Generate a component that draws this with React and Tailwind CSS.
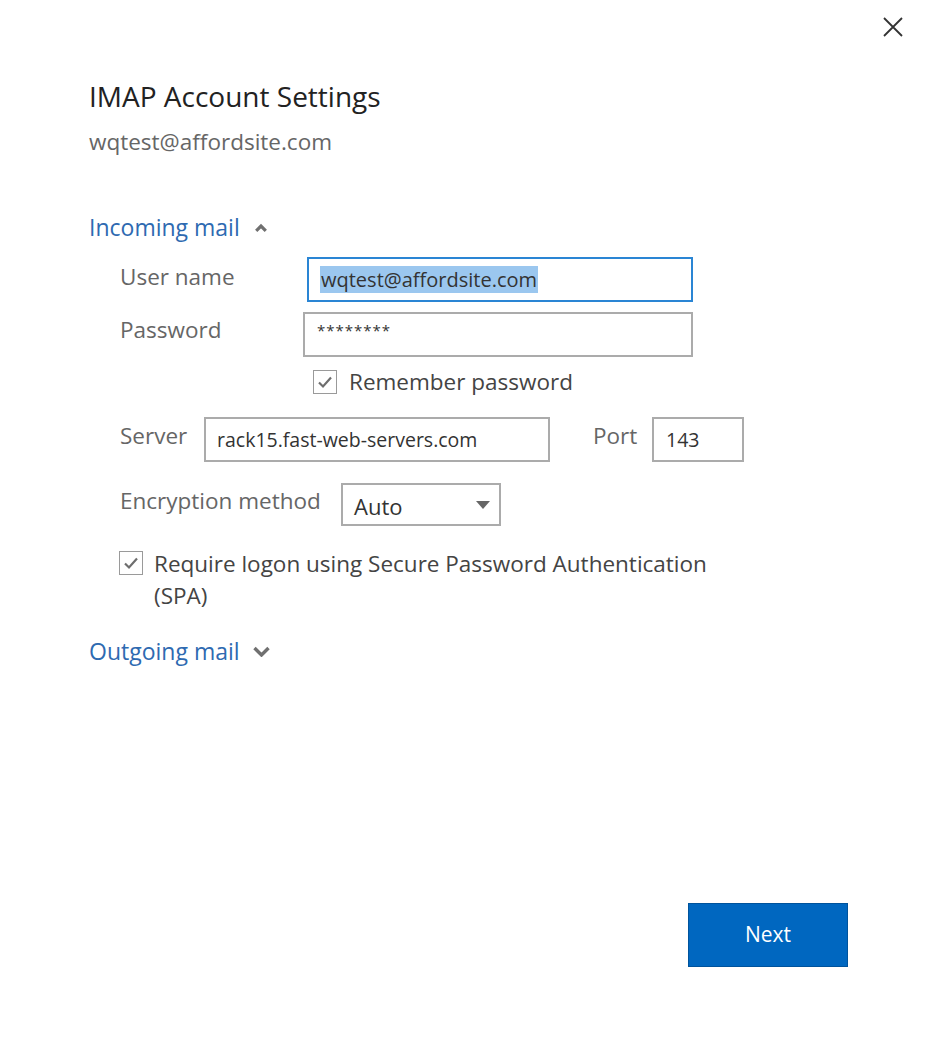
import React from 'react';

const font = { fontFamily: '"Open Sans", "Noto Sans", sans-serif' };

function CheckBox({ className = '' }) {
    return (
        <span className={`w-[24px] h-[24px] border border-[#9a9a9a] bg-white flex items-center justify-center flex-shrink-0 ${className}`}>
            <svg width="16" height="14" viewBox="0 0 16 14" fill="none">
                <path d="M2 7.5 L6 11.5 L14 2.5" stroke="#6e6e6e" strokeWidth="2.2" />
            </svg>
        </span>
    );
}

function ChevronUp() {
    return (
        <svg width="12" height="9" viewBox="0 0 12 9" className="flex-shrink-0">
            <path d="M1.2 7.8 L6 3 L10.8 7.8" stroke="#707070" strokeWidth="3.2" fill="none" />
        </svg>
    );
}

function ChevronDown() {
    return (
        <svg width="17" height="11" viewBox="0 0 17 11" className="flex-shrink-0">
            <path d="M1.5 2 L8.5 9 L15.5 2" stroke="#707070" strokeWidth="3.4" fill="none" />
        </svg>
    );
}

export default function App() {
    return (
        <div className="w-[938px] h-[1054px] bg-white flex flex-col text-[#444]" style={font}>
            {/* close */}
            <div className="flex justify-end pt-[17px] pr-[35px]">
                <svg width="20" height="20" viewBox="0 0 20 20">
                    <path d="M1 1 L19 19 M19 1 L1 19" stroke="#333" strokeWidth="1.8" />
                </svg>
            </div>

            <div className="pl-[89px] flex flex-col">
                <h1 className="text-[28px] leading-[36px] text-[#222] mt-[41px]">IMAP Account Settings</h1>
                <p className="text-[22.5px] leading-[30px] text-[#666] mt-[13px]">wqtest@affordsite.com</p>

                {/* Incoming mail */}
                <div className="flex items-center gap-[15px] mt-[55px] h-[30px]">
                    <span className="text-[23px] leading-[30px] text-[#2e6ab1]">Incoming mail</span>
                    <ChevronUp />
                </div>

                <div className="flex flex-col pl-[31px]">
                    <div className="flex items-center mt-[15px]">
                        <span className="w-[187px] text-[22.5px] leading-[30px] text-[#666] -mt-[6px]">User name</span>
                        <div className="w-[386px] h-[45px] border-2 border-[#2a85d4] flex items-center pl-[11px]">
                            <span className="bg-[#9bc7ef] text-[20px] leading-[27px] text-[#333] px-[1px]">wqtest@affordsite.com</span>
                        </div>
                    </div>

                    <div className="flex items-center mt-[10px]">
                        <span className="w-[183px] text-[22.5px] leading-[30px] text-[#666] -mt-[9px]">Password</span>
                        <div className="w-[390px] h-[45px] border-2 border-[#ababab] flex pl-[12px] pt-[3px]">
                            <span className="text-[15px] leading-[26px] text-[#333] tracking-[1px]">********</span>
                        </div>
                    </div>

                    <div className="flex items-center gap-[12px] ml-[193px] mt-[13px] h-[24px]">
                        <CheckBox />
                        <span className="text-[22.5px] leading-[30px] text-[#444]">Remember password</span>
                    </div>

                    <div className="flex items-center mt-[23px]">
                        <span className="w-[84px] text-[22.5px] leading-[30px] text-[#666] -mt-[7px]">Server</span>
                        <div className="w-[346px] h-[45px] border-2 border-[#ababab] flex items-center pl-[11px]">
                            <span className="text-[19.5px] leading-[26px] text-[#333]">rack15.fast-web-servers.com</span>
                        </div>
                        <span className="ml-[43px] w-[59px] text-[22.5px] leading-[30px] text-[#666] -mt-[7px]">Port</span>
                        <div className="w-[92px] h-[45px] border-2 border-[#ababab] flex items-center pl-[12px]">
                            <span className="text-[19.5px] leading-[26px] text-[#333]">143</span>
                        </div>
                    </div>

                    <div className="flex items-center mt-[21px]">
                        <span className="w-[221px] text-[22.5px] leading-[30px] text-[#666] -mt-[8px]">Encryption method</span>
                        <div className="w-[160px] h-[43px] border-2 border-[#ababab] flex items-center pl-[11px] pr-[9px] justify-between">
                            <span className="text-[22px] leading-[30px] text-[#333] mt-[3px]">Auto</span>
                            <svg width="14" height="8" viewBox="0 0 14 8">
                                <path d="M0 0 L14 0 L7 8 Z" fill="#666" />
                            </svg>
                        </div>
                    </div>

                    <div className="flex items-start gap-[11px] mt-[22px] -ml-[1px]">
                        <CheckBox className="mt-[3px]" />
                        <span className="text-[22.5px] leading-[32px] text-[#444] w-[575px]">
                            Require logon using Secure Password Authentication (SPA)
                        </span>
                    </div>
                </div>

                {/* Outgoing mail */}
                <div className="flex items-center gap-[13px] mt-[24px] h-[30px]">
                    <span className="text-[23px] leading-[30px] text-[#2e6ab1]">Outgoing mail</span>
                    <ChevronDown />
                </div>
            </div>

            <div className="flex justify-end pr-[90px] mt-auto mb-[87px]">
                <button className="w-[160px] h-[64px] bg-[#0067c0] border border-[#00539c] text-white text-[21px]">
                    Next
                </button>
            </div>
        </div>
    );
}
